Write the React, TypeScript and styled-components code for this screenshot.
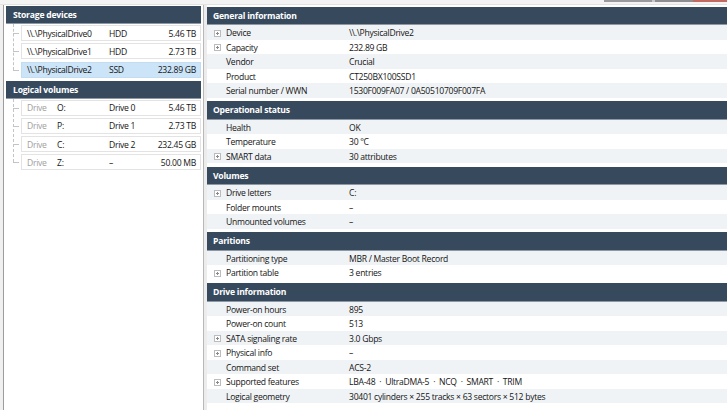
import { FC } from 'react'
import styled, { createGlobalStyle } from 'styled-components'

const GlobalStyle = createGlobalStyle`
  html, body {
    margin: 0;
    padding: 0;
    background: #f0f0f0;
  }
  body {
    font-family: 'Open Sans', 'Noto Sans', sans-serif;
    font-size: 8.6px;
    letter-spacing: -0.28px;
    color: #141414;
  }
`

const storageDevices = [
  { name: '\\\\.\\PhysicalDrive0', type: 'HDD', size: '5.46 TB' },
  { name: '\\\\.\\PhysicalDrive1', type: 'HDD', size: '2.73 TB' },
  { name: '\\\\.\\PhysicalDrive2', type: 'SSD', size: '232.89 GB', selected: true },
]

const volumes = [
  { letter: 'O:', drive: 'Drive 0', size: '5.46 TB' },
  { letter: 'P:', drive: 'Drive 1', size: '2.73 TB' },
  { letter: 'C:', drive: 'Drive 2', size: '232.45 GB' },
  { letter: 'Z:', drive: '–', size: '50.00 MB' },
]

type Prop = { label: string; value: string; expandable?: boolean }

const sections: { title: string; rows: Prop[] }[] = [
  {
    title: 'General information',
    rows: [
      { label: 'Device', value: '\\\\.\\PhysicalDrive2', expandable: true },
      { label: 'Capacity', value: '232.89 GB', expandable: true },
      { label: 'Vendor', value: 'Crucial' },
      { label: 'Product', value: 'CT250BX100SSD1' },
      { label: 'Serial number / WWN', value: '1530F009FA07 / 0A50510709F007FA' },
    ],
  },
  {
    title: 'Operational status',
    rows: [
      { label: 'Health', value: 'OK' },
      { label: 'Temperature', value: '30 °C' },
      { label: 'SMART data', value: '30 attributes', expandable: true },
    ],
  },
  {
    title: 'Volumes',
    rows: [
      { label: 'Drive letters', value: 'C:', expandable: true },
      { label: 'Folder mounts', value: '–' },
      { label: 'Unmounted volumes', value: '–' },
    ],
  },
  {
    title: 'Paritions',
    rows: [
      { label: 'Partitioning type', value: 'MBR / Master Boot Record' },
      { label: 'Partition table', value: '3 entries', expandable: true },
    ],
  },
  {
    title: 'Drive information',
    rows: [
      { label: 'Power-on hours', value: '895' },
      { label: 'Power-on count', value: '513' },
      { label: 'SATA signaling rate', value: '3.0 Gbps', expandable: true },
      { label: 'Physical info', value: '–', expandable: true },
      { label: 'Command set', value: 'ACS-2' },
      { label: 'Supported features', value: 'LBA-48  ·  UltraDMA-5  ·  NCQ  ·  SMART  ·  TRIM', expandable: true },
      { label: 'Logical geometry', value: '30401 cylinders × 255 tracks × 63 sectors × 512 bytes' },
    ],
  },
]

const ExpandIcon: FC = () => (
  <svg width="7" height="7" viewBox="0 0 7 7">
    <rect x="0.5" y="0.5" width="6" height="6" fill="#fff" stroke="#bcbcbc" />
    <path d="M2 3.5h3M3.5 2v3" stroke="#8a8a8a" strokeWidth="1" />
  </svg>
)

export default function App() {
  return (
    <>
      <GlobalStyle />
      <Window>
        <TopStrip>
          <Spacer />
          <ChromeBit $color="#9a9a9a" $width={48} />
          <ChromeBit $color="#c9c9c9" $width={3} />
          <ChromeBit $color="#8e8e8e" $width={38} />
          <ChromeBit $color="#c26a62" $width={34} />
        </TopStrip>
        <Main>
          <LeftPanel>
            <PanelHeader>Storage devices</PanelHeader>
            <Tree>
              {storageDevices.map(d => (
                <TreeItem key={d.name}>
                  <ItemBox $selected={d.selected}>
                    <Cell $width={82}>{d.name}</Cell>
                    <Cell $width={40}>{d.type}</Cell>
                    <SizeCell>{d.size}</SizeCell>
                  </ItemBox>
                </TreeItem>
              ))}
            </Tree>
            <PanelHeader>Logical volumes</PanelHeader>
            <Tree>
              {volumes.map(v => (
                <TreeItem key={v.letter}>
                  <ItemBox>
                    <Cell $width={30} $muted>Drive</Cell>
                    <Cell $width={52}>{v.letter}</Cell>
                    <Cell $width={40}>{v.drive}</Cell>
                    <SizeCell>{v.size}</SizeCell>
                  </ItemBox>
                </TreeItem>
              ))}
            </Tree>
          </LeftPanel>
          <Splitter />
          <RightPanel>
            {sections.map(s => (
              <Section key={s.title}>
                <SectionHeader>{s.title}</SectionHeader>
                {s.rows.map((r, i) => (
                  <PropRow key={r.label} $shaded={i % 2 === 0}>
                    <IconCell>{r.expandable && <ExpandIcon />}</IconCell>
                    <Label>{r.label}</Label>
                    <Value>{r.value}</Value>
                  </PropRow>
                ))}
              </Section>
            ))}
          </RightPanel>
        </Main>
      </Window>
    </>
  )
}

const Window = styled.div`
  display: flex;
  flex-direction: column;
  width: 727px;
  height: 410px;
  overflow: hidden;
`

const TopStrip = styled.div`
  display: flex;
  height: 5px;
  background: #f3f3f3;
  border-bottom: 1px solid #e2e2e2;
  box-sizing: border-box;
`

const Spacer = styled.div`
  flex: 1;
`

const ChromeBit = styled.div<{ $color: string; $width: number }>`
  width: ${p => p.$width}px;
  height: 2px;
  background: ${p => p.$color};
`

const Main = styled.div`
  display: flex;
  flex: 1;
  min-height: 0;
`

const LeftPanel = styled.div`
  width: 195px;
  margin-left: 3px;
  padding: 1px 2px 0 2px;
  background: #fff;
  border-left: 1px solid #9c9c9c;
  border-right: 1px solid #b8b8b8;
  display: flex;
  flex-direction: column;
`

const Splitter = styled.div`
  width: 3px;
  background: #ececec;
`

const PanelHeader = styled.div`
  height: 18px;
  box-sizing: border-box;
  display: flex;
  align-items: center;
  padding: 1px 0 0 7px;
  background: #374a5d;
  color: #fff;
  font-weight: 700;
  letter-spacing: -0.22px;
  border-bottom: 1px solid #8d98a4;
`

const Tree = styled.div`
  display: flex;
  flex-direction: column;
  gap: 2.3px;
  padding: 1px 0 3px 15px;
  position: relative;
  &::before {
    content: '';
    position: absolute;
    left: 7px;
    top: 0;
    bottom: 11px;
    border-left: 1px dashed #c4c4c4;
  }
`

const TreeItem = styled.div`
  position: relative;
  &::before {
    content: '';
    position: absolute;
    left: -8px;
    top: 50%;
    width: 6px;
    border-top: 1px dashed #c4c4c4;
  }
`

const ItemBox = styled.div<{ $selected?: boolean }>`
  height: 16px;
  display: flex;
  align-items: center;
  padding: 1px 4px 0 5px;
  box-sizing: border-box;
  background: ${p => (p.$selected ? '#cce4f7' : '#fff')};
  border: 1px solid ${p => (p.$selected ? '#c3dcf0' : '#e3e3e3')};
`

const Cell = styled.div<{ $width: number; $muted?: boolean }>`
  width: ${p => p.$width}px;
  color: ${p => (p.$muted ? '#a0a0a0' : '#141414')};
  white-space: nowrap;
`

const SizeCell = styled.div`
  flex: 1;
  text-align: right;
  white-space: nowrap;
`

const RightPanel = styled.div`
  flex: 1;
  background: #fff;
  padding-top: 1.5px;
  display: flex;
  flex-direction: column;
  gap: 3.5px;
`

const Section = styled.div`
  display: flex;
  flex-direction: column;
`

const SectionHeader = styled(PanelHeader)`
  height: 18.5px;
  padding-left: 6px;
`

const PropRow = styled.div<{ $shaded: boolean }>`
  height: 14.5px;
  box-sizing: border-box;
  padding-top: 1.5px;
  display: grid;
  grid-template-columns: 19px 123px 1fr;
  align-items: center;
  background: ${p => (p.$shaded ? '#f0f3f6' : '#fff')};
  white-space: pre;
`

const IconCell = styled.div`
  display: flex;
  justify-content: center;
  padding-left: 1px;
`

const Label = styled.div``

const Value = styled.div``
